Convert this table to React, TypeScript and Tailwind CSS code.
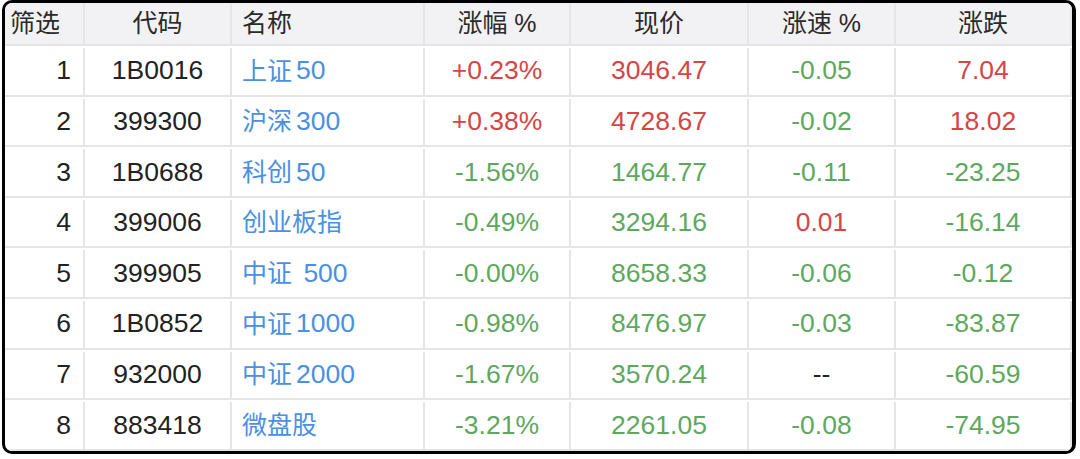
const headers = [
  { label: "筛选", align: "justify-start pl-[5px]" },
  { label: "代码", align: "justify-center" },
  { label: "名称", align: "justify-start pl-[10px]" },
  { label: "涨幅 %", align: "justify-center" },
  { label: "现价", align: "justify-center" },
  { label: "涨速 %", align: "justify-center" },
  { label: "涨跌", align: "justify-center" },
];

type Row = {
  code: string;
  name: string;
  num: string;
  pct: string;
  price: string;
  speed: string;
  change: string;
};

const rows: Row[] = [
  { code: "1B0016", name: "上证", num: "50", pct: "+0.23%", price: "3046.47", speed: "-0.05", change: "7.04" },
  { code: "399300", name: "沪深", num: "300", pct: "+0.38%", price: "4728.67", speed: "-0.02", change: "18.02" },
  { code: "1B0688", name: "科创", num: "50", pct: "-1.56%", price: "1464.77", speed: "-0.11", change: "-23.25" },
  { code: "399006", name: "创业板指", num: "", pct: "-0.49%", price: "3294.16", speed: "0.01", change: "-16.14" },
  { code: "399905", name: "中证", num: " 500", pct: "-0.00%", price: "8658.33", speed: "-0.06", change: "-0.12" },
  { code: "1B0852", name: "中证", num: "1000", pct: "-0.98%", price: "8476.97", speed: "-0.03", change: "-83.87" },
  { code: "932000", name: "中证", num: "2000", pct: "-1.67%", price: "3570.24", speed: "--", change: "-60.59" },
  { code: "883418", name: "微盘股", num: "", pct: "-3.21%", price: "2261.05", speed: "-0.08", change: "-74.95" },
];

const tone = (v: string) => {
  if (v === "--") return "text-[#222222]";
  if (v.startsWith("-")) return "text-[#5ea85e]";
  return "text-[#d64545]";
};

const cols = "grid grid-cols-[80px_147px_193px_146px_178px_147px_176px]";
const cell = "flex items-center border-r-2 border-b-2 border-[#e5e5e7]";

export default function App() {
  return (
    <div className="w-[1080px] h-[459px] bg-white overflow-hidden font-['Liberation_Sans','Noto_Sans_CJK_SC',sans-serif]">
      <div className="ml-[2px] w-[1074px] h-[454px] border-l-[3px] border-r-4 border-t-[3px] border-b-[3px] border-black rounded-[10px] overflow-hidden bg-white">
        <div className={`${cols} h-[43px] bg-[#f2f2f4] text-[25px] text-[#2a2a2a]`}>
          {headers.map((h, i) => (
            <div key={h.label} className={`${cell} ${h.align} ${i === 6 ? "border-r-0" : ""}`}>
              {h.label}
            </div>
          ))}
        </div>
        {rows.map((r, i) => (
          <div key={r.code} className={`${cols} h-[50.6px] text-[26.5px] pt-[2px]`}>
            <div className={`${cell} justify-end pr-[12px] text-[#222222]`}>{i + 1}</div>
            <div className={`${cell} justify-center text-[#222222]`}>{r.code}</div>
            <div className={`${cell} justify-start pl-[10px] text-[#4a90e2] whitespace-pre`}>
              <span className="text-[25px]">{r.name}</span>
              {r.num && <span className="ml-[4px]">{r.num}</span>}
            </div>
            <div className={`${cell} justify-center ${tone(r.pct)}`}>{r.pct}</div>
            <div className={`${cell} justify-center ${tone(r.pct)}`}>{r.price}</div>
            <div className={`${cell} justify-center ${tone(r.speed)}`}>{r.speed}</div>
            <div className={`${cell} justify-center border-r-0 ${tone(r.change)}`}>{r.change}</div>
          </div>
        ))}
      </div>
    </div>
  );
}
